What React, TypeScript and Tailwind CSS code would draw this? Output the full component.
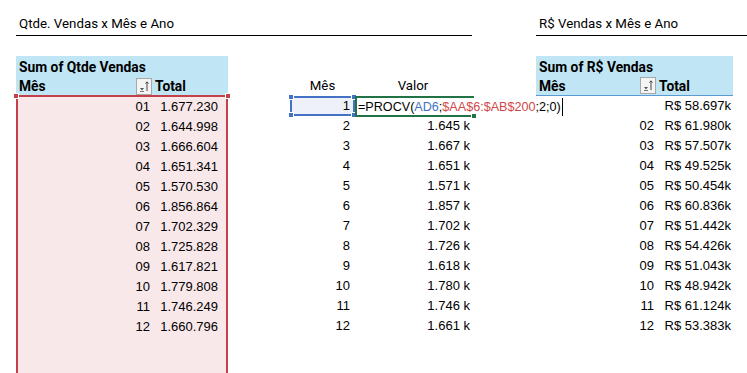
import React from "react";

const qtde = [
  ["01", "1.677.230"],
  ["02", "1.644.998"],
  ["03", "1.666.604"],
  ["04", "1.651.341"],
  ["05", "1.570.530"],
  ["06", "1.856.864"],
  ["07", "1.702.329"],
  ["08", "1.725.828"],
  ["09", "1.617.821"],
  ["10", "1.779.808"],
  ["11", "1.746.249"],
  ["12", "1.660.796"],
];

const valores = ["1.645 k", "1.667 k", "1.651 k", "1.571 k", "1.857 k", "1.702 k", "1.726 k", "1.618 k", "1.780 k", "1.746 k", "1.661 k"];

const reais = [
  ["", "R$ 58.697k"],
  ["02", "R$ 61.980k"],
  ["03", "R$ 57.507k"],
  ["04", "R$ 49.525k"],
  ["05", "R$ 50.454k"],
  ["06", "R$ 60.836k"],
  ["07", "R$ 51.442k"],
  ["08", "R$ 54.426k"],
  ["09", "R$ 51.043k"],
  ["10", "R$ 48.942k"],
  ["11", "R$ 61.124k"],
  ["12", "R$ 53.383k"],
];

function SortIcon() {
  return (
    <svg width="16" height="17" viewBox="0 0 16 17" className="shrink-0">
      <rect x="0.5" y="0.5" width="15" height="16" fill="#f4f4f4" stroke="#a8a8a8" />
      <path d="M4 10 L6 12.5 L8 10 Z" fill="#555" />
      <path d="M4 13.5 H8" stroke="#777" strokeWidth="1" />
      <path d="M11 13 V4 M9.5 5.5 L11 3.8 L12.5 5.5" stroke="#444" strokeWidth="1" fill="none" />
    </svg>
  );
}

function Handle({ className }: { className: string }) {
  return <div className={"absolute w-[6px] h-[6px] " + className} />;
}

export default function App() {
  return (
    <div className="relative w-[747px] h-[373px] overflow-hidden bg-white text-black font-['Liberation_Sans',Arial,sans-serif] text-[13px]">
      {/* titles */}
      <div className="flex pt-[14px]">
        <div className="ml-[16px] w-[456px] h-[22px] border-b border-black pl-[3px] leading-[20px] text-[13.3px] font-['Roboto',sans-serif]">
          Qtde. Vendas x Mês e Ano
        </div>
        <div className="ml-[64px] w-[211px] h-[22px] border-b border-black pl-[3px] leading-[20px] text-[13.3px] font-['Roboto',sans-serif]">
          R$ Vendas x Mês e Ano
        </div>
      </div>

      <div className="flex mt-[20px]">
        {/* left pivot */}
        <div className="ml-[16px] w-[212px]">
          <div className="bg-[#c0e6f5] h-[40px] font-['Roboto',sans-serif] font-bold text-[13.8px] leading-[20px]">
            <div className="h-[20px] pl-[3px] pt-px">Sum of Qtde Vendas</div>
            <div className="h-[20px] flex items-center">
              <div className="w-[120px] pl-[3px]">Mês</div>
              <SortIcon />
              <div className="pl-[3px]">Total</div>
            </div>
          </div>
          <div className="relative -mt-px h-[280px] border-2 border-[#c4404a] bg-[#f9e8ea]">
            {qtde.map(([m, v]) => (
              <div key={m} className="flex h-[20px] leading-[20px]">
                <div className="w-[132px] text-right">{m}</div>
                <div className="flex-1 text-right pr-[8px]">{v}</div>
              </div>
            ))}
            <Handle className="-left-[5px] -top-[4px] bg-[#c4404a] border border-white" />
            <Handle className="-right-[5px] -top-[4px] bg-[#c4404a] border border-white" />
          </div>
        </div>

        {/* middle table */}
        <div className="ml-[62px] w-[184px]">
          <div className="h-[20px]" />
          <div className="flex h-[20px] leading-[20px] font-['Roboto',sans-serif] text-[13.3px]">
            <div className="w-[65px] text-center">Mês</div>
            <div className="w-[116px] text-center">Valor</div>
          </div>
          <div className="relative flex h-[20px] leading-[20px]">
            <div className="relative w-[65px] h-[20px] bg-[#eef1f9] border-2 border-[#4472c4] text-right pr-[3px] leading-[16px]">
              1
              <Handle className="-left-[4px] -top-[4px] bg-[#4472c4] border border-white" />
              <Handle className="-right-[4px] -top-[4px] bg-[#4472c4] border border-white" />
              <Handle className="-left-[4px] -bottom-[4px] bg-[#4472c4] border border-white" />
              <Handle className="-right-[4px] -bottom-[4px] bg-[#4472c4] border border-white" />
            </div>
            <div className="relative w-[119px] h-[21px] border-t-2 border-b-2 border-l-2 border-[#217346] bg-white">
              <div className="absolute left-[1px] top-0 flex items-center whitespace-nowrap leading-[17px] text-[12.6px] z-10">
                <span>=PROCV(</span>
                <span className="text-[#4472c4]">AD6</span>
                <span>;</span>
                <span className="text-[#d04848]">$AA$6:$AB$200</span>
                <span>;2;0)</span>
                <span className="ml-[1px] inline-block w-px h-[18px] bg-black" />
              </div>
              <Handle className="-right-[3px] -bottom-[4px] bg-[#217346] border border-white" />
            </div>
          </div>
          {valores.map((v, i) => (
            <div key={v} className="flex h-[20px] leading-[20px]">
              <div className="w-[65px] text-right pr-[5px]">{i + 2}</div>
              <div className="w-[119px] text-right pr-[4px]">{v}</div>
            </div>
          ))}
        </div>

        {/* right pivot */}
        <div className="ml-[62px] w-[197px]">
          <div className="bg-[#c0e6f5] h-[40px] border-b border-[#5b9bd5] font-['Roboto',sans-serif] font-bold text-[13.8px] leading-[20px]">
            <div className="h-[20px] pl-[3px] pt-px">Sum of R$ Vendas</div>
            <div className="h-[19px] flex items-center">
              <div className="w-[104px] pl-[3px]">Mês</div>
              <SortIcon />
              <div className="pl-[3px]">Total</div>
            </div>
          </div>
          {reais.map(([m, v], i) => (
            <div key={i} className="flex h-[20px] leading-[20px]">
              <div className="w-[120px] text-right pr-[2px]">{m}</div>
              <div className="flex-1 text-right pr-[2px]">{v}</div>
            </div>
          ))}
        </div>
      </div>
    </div>
  );
}
